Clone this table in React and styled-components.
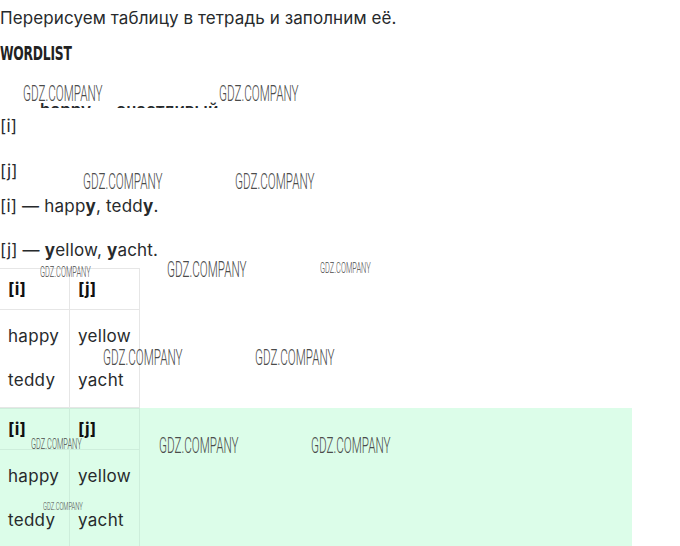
import React from "react";
import styled, { createGlobalStyle } from "styled-components";

const GlobalStyle = createGlobalStyle`
    body {
        margin: 0;
        background: #fff;
        font-family: 'Inter', 'Noto Sans', sans-serif;
        color: #272a2c;
    }
`;

const Page = styled.div`
    position: relative;
    width: 680px;
    height: 546px;
    overflow: hidden;
`;

const Intro = styled.p`
    margin: 6px 0 0;
    font-size: 17px;
    line-height: 24px;
    letter-spacing: 0.1px;
`;

const Heading = styled.h3`
    margin: 11px 0 0;
    font-family: 'DejaVu Sans', sans-serif;
    font-stretch: condensed;
    font-weight: 700;
    font-size: 19px;
    line-height: 24px;
    letter-spacing: -0.3px;
    color: #222;
    transform: scaleX(0.72);
    transform-origin: left center;
`;

const ClipRow = styled.div`
    margin-top: 23px;
    height: 20px;
    overflow: hidden;
    display: flex;
    align-items: flex-start;
    gap: 25px;
    padding: 10px 0 0 40px;
    box-sizing: border-box;
    font-size: 17px;
    font-weight: 600;
    line-height: 24px;
`;

const Line = styled.div`
    margin-top: ${p => p.$mt}px;
    font-size: 17px;
    line-height: 24px;
    letter-spacing: 0.2px;
`;

const Block = styled.div`
    margin-top: ${p => p.$mt || 0}px;
    width: ${p => (p.$green ? "632px" : "auto")};
    background: ${p => (p.$green ? "#dcfde9" : "transparent")};
    height: ${p => (p.$green ? "150px" : "auto")};
`;

const Table = styled.table`
    border-collapse: collapse;
    font-size: 17px;
    letter-spacing: 0.3px;
`;

const Cell = styled.td`
    border: 1px solid ${p => (p.$green ? "#cdeedb" : "#e6e6e6")};
    width: 53px;
    padding: ${p => (p.$head ? "0 8px" : "4px 8px 5px")};
    height: ${p => (p.$head ? "40px" : "auto")};
    vertical-align: ${p => (p.$head ? "middle" : "top")};
    font-weight: ${p => (p.$head ? 700 : 400)};
    line-height: ${p => (p.$head ? "24px" : "44px")};
    color: ${p => (p.$head ? "#111" : "#272a2c")};
    &:first-child {
        border-left: none;
    }
`;

const Mark = styled.span`
    position: absolute;
    left: ${p => p.$x}px;
    top: ${p => p.$y - p.$size * 0.55}px;
    font-family: 'Roboto', sans-serif;
    font-weight: 300;
    font-size: ${p => p.$size}px;
    line-height: 1;
    color: #4b4b4b;
    white-space: nowrap;
    transform: scaleX(0.53);
    transform-origin: left center;
    pointer-events: none;
`;

const marks = [
    [23, 95, 22], [219, 95, 22],
    [83, 183, 22], [235, 183, 22],
    [40, 273, 14], [167, 271, 22], [320, 269, 14],
    [103, 359, 22], [255, 359, 22],
    [31, 445, 14], [159, 447, 22], [311, 447, 22],
    [43, 507, 11],
];

function SoundTable({ green }) {
    return (
        <Table>
            <tbody>
                <tr>
                    <Cell $head $green={green}>[i]</Cell>
                    <Cell $head $green={green}>[j]</Cell>
                </tr>
                <tr>
                    <Cell $green={green}>happy<br />teddy</Cell>
                    <Cell $green={green}>yellow<br />yacht</Cell>
                </tr>
            </tbody>
        </Table>
    );
}

export default function App() {
    return (
        <Page>
            <GlobalStyle />
            <Intro>Перерисуем таблицу в тетрадь и заполним её.</Intro>
            <Heading>WORDLIST</Heading>
            <ClipRow>
                <span>happy</span>
                <span>счастливый</span>
            </ClipRow>
            <Line $mt={6}>[i]</Line>
            <Line $mt={21}>[j]</Line>
            <Line $mt={11}>[i] — happ<b>y</b>, tedd<b>y</b>.</Line>
            <Line $mt={20}>[j] — <b>y</b>ellow, <b>y</b>acht.</Line>
            <Block $mt={6}>
                <SoundTable />
            </Block>
            <Block $green>
                <SoundTable green />
            </Block>
            {marks.map(([x, y, s], i) => (
                <Mark key={i} $x={x} $y={y} $size={s}>GDZ.COMPANY</Mark>
            ))}
        </Page>
    );
}
